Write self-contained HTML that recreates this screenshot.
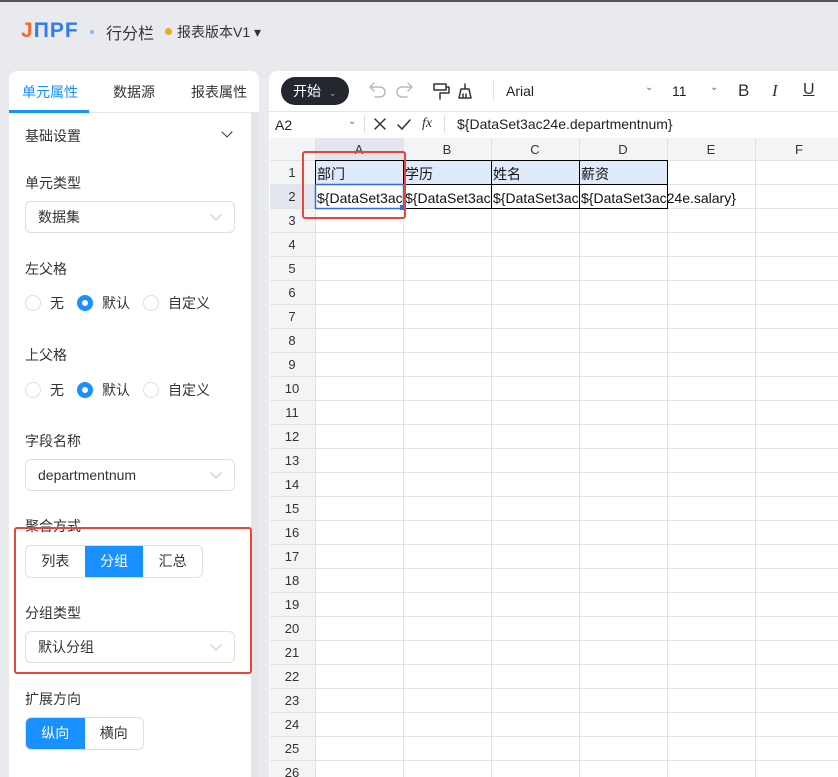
<!DOCTYPE html>
<html><head><meta charset="utf-8"><style>
*{box-sizing:border-box;margin:0;padding:0}
body{width:838px;height:777px;overflow:hidden;background:#e9eaee;font-family:"Liberation Sans","Noto Sans CJK SC",sans-serif;color:#333;position:relative;font-size:14px}
.a{position:absolute}
.lbl{position:absolute;left:25px;font-size:14px;color:#333}
.sel{position:absolute;left:25px;width:210px;height:32px;border:1px solid #dcdfe6;border-radius:6px;background:#fff;padding-left:12px;line-height:30px;font-size:14px}
.sel:after{content:"";position:absolute;right:14px;top:9px;width:7px;height:7px;border-right:1px solid #c0c4cc;border-bottom:1px solid #c0c4cc;transform:rotate(45deg)}
.radio{position:absolute;font-size:14px;display:flex;align-items:center}
.rc{width:16px;height:16px;border:1px solid #dcdfe6;border-radius:50%;margin-right:9px;display:inline-block;background:#fff}
.rc.on{border:5px solid #1890ff}
.seg{position:absolute;left:25px;display:flex;border:1px solid #dcdfe6;border-radius:6px;overflow:hidden;height:33px;background:#fff}
.seg div{width:59px;text-align:center;line-height:31px;font-size:14px}
.seg .on{background:#1890ff;color:#fff}
.grid{position:absolute;left:270px;top:138px;width:568px;height:639px;background:#fff;overflow:hidden}
</style></head><body>
<div class="a" style="left:0;top:0;width:838px;height:2px;background:#555"></div>
<div class="a" style="left:21px;top:19px;font-size:21px;letter-spacing:1px;line-height:24px;font-weight:bold"><span style="color:#f06a2a">J</span><span style="color:#2f7cf0">ΠPF</span></div>
<div class="a" style="left:90px;top:30px;width:4px;height:4px;border-radius:50%;background:#8ab4f0"></div>
<div class="a" style="left:106px;top:20px;font-size:16px;color:#333">行分栏</div>
<div class="a" style="left:165px;top:28px;width:7px;height:7px;border-radius:50%;background:#f5a623"></div>
<div class="a" style="left:177px;top:22px;font-size:14px;color:#333">报表版本V1 ▾</div>

<div class="a" style="left:9px;top:71px;width:250px;height:706px;background:#fff;border-radius:8px 8px 0 0"></div>
<div class="a" style="left:251px;top:113px;width:8px;height:664px;background:#e5e6ea"></div>
<div class="a" style="left:9px;top:112px;width:250px;height:1px;background:#e4e7ed"></div>
<div class="a" style="left:9px;top:110px;width:80px;height:3px;background:#1890ff"></div>
<div class="a" style="left:22px;top:82px;color:#1890ff;font-size:14px">单元属性</div>
<div class="a" style="left:113px;top:82px;font-size:14px">数据源</div>
<div class="a" style="left:191px;top:82px;font-size:14px">报表属性</div>
<div class="lbl" style="top:126px">基础设置</div>
<div class="a" style="left:223px;top:128px;width:8px;height:8px;border-right:1.5px solid #333;border-bottom:1.5px solid #333;transform:rotate(45deg)"></div>
<div class="lbl" style="top:173px">单元类型</div>
<div class="sel" style="top:201px">数据集</div>
<div class="lbl" style="top:259px">左父格</div>
<div class="radio" style="left:25px;top:293px"><span class="rc"></span>无</div>
<div class="radio" style="left:77px;top:293px"><span class="rc on"></span>默认</div>
<div class="radio" style="left:143px;top:293px"><span class="rc"></span>自定义</div>
<div class="lbl" style="top:345px">上父格</div>
<div class="radio" style="left:25px;top:380px"><span class="rc"></span>无</div>
<div class="radio" style="left:77px;top:380px"><span class="rc on"></span>默认</div>
<div class="radio" style="left:143px;top:380px"><span class="rc"></span>自定义</div>
<div class="lbl" style="top:431px">字段名称</div>
<div class="sel" style="top:459px">departmentnum</div>
<div class="lbl" style="top:516px">聚合方式</div>
<div class="seg" style="top:545px;width:178px"><div>列表</div><div class="on">分组</div><div>汇总</div></div>
<div class="lbl" style="top:603px">分组类型</div>
<div class="sel" style="top:631px">默认分组</div>
<div class="a" style="left:14px;top:527px;width:238px;height:147px;border:2px solid #e8453c;border-radius:3px"></div>
<div class="lbl" style="top:689px">扩展方向</div>
<div class="seg" style="top:717px;width:119px"><div class="on">纵向</div><div>横向</div></div>

<div class="a" style="left:269px;top:71px;width:569px;height:706px;background:#fff;border-radius:8px 0 0 0"></div>
<div class="a" style="left:281px;top:77px;width:68px;height:28px;border-radius:14px;background:#23272e;color:#fff;font-size:14px;line-height:28px;padding-left:12px">开始 <span style="font-size:9px;color:#aaa;margin-left:4px">⌄</span></div>
<svg class="a" style="left:360px;top:76px" width="140" height="30" fill="none" stroke-width="1.5" stroke-linecap="round" stroke-linejoin="round">
<path d="M14 9 L10 13 L14 17 M10 13 H20 A5 5 0 0 1 20 23 H15" stroke="#bbb" transform="translate(0,-2)"/>
<path d="M52 9 L56 13 L52 17 M56 13 H46 A5 5 0 0 0 46 23 H51" stroke="#bbb" transform="translate(-4,-2)"/>
<path d="M74 8 H86 V14 H74 Z M86 11 H89 V17 H80 V23" stroke="#333"/>
<path d="M105 8 V13 M101 13 H109 L111 22 H99 Z M103 18 V22 M106 18 V22" stroke="#333"/>
</svg>
<div class="a" style="left:493px;top:80px;width:1px;height:22px;background:#e4e4e4"></div>
<div class="a" style="left:506px;top:83px;font-size:14px;color:#222">Arial</div>
<div class="a" style="left:645px;top:82px;font-size:10px;color:#666">⌄</div>
<div class="a" style="left:672px;top:83px;font-size:14px;color:#222">11</div>
<div class="a" style="left:710px;top:82px;font-size:10px;color:#666">⌄</div>
<div class="a" style="left:738px;top:81px;font-size:17px;color:#333">B</div>
<div class="a" style="left:772px;top:81px;font-size:17px;color:#333;font-style:italic;font-family:'Liberation Serif',serif">I</div>
<div class="a" style="left:803px;top:81px;font-size:16px;color:#333;text-decoration:underline">U</div>
<div class="a" style="left:269px;top:111px;width:569px;height:1px;background:#e4e4e4"></div>
<div class="a" style="left:275px;top:117px;font-size:14px;color:#222">A2</div>
<div class="a" style="left:348px;top:116px;font-size:10px;color:#666">⌄</div>
<div class="a" style="left:364px;top:115px;width:1px;height:18px;background:#ddd"></div>
<svg class="a" style="left:370px;top:115px" width="70" height="20" fill="none" stroke="#333" stroke-width="1.5" stroke-linecap="round">
<path d="M5 4 L15 14 M15 4 L5 14"/><path d="M28 10 L32 14 L40 5"/>
</svg>
<div class="a" style="left:422px;top:116px;font-size:14px;font-style:italic;font-family:'Liberation Serif',serif;color:#333">fx</div>
<div class="a" style="left:444px;top:115px;width:1px;height:18px;background:#ddd"></div>
<div class="a" style="left:457px;top:116px;font-size:14px;color:#222">${DataSet3ac24e.departmentnum}</div>

<div class="grid">
<svg width="568" height="639" style="position:absolute;left:0;top:0">
<rect x="0" y="0" width="568" height="22" fill="#f3f4f6"/>
<rect x="0" y="0" width="45" height="639" fill="#f3f4f6"/>
<rect x="45" y="0" width="88" height="22" fill="#e3e6ee"/>
<rect x="0" y="46" width="45" height="24" fill="#e3e6ee"/>
<rect x="45" y="22" width="352" height="24" fill="#dfeafb"/>
<g stroke="#e2e2e2" stroke-width="1">
<line x1="45.5" y1="0" x2="45.5" y2="639"/><line x1="133.5" y1="0" x2="133.5" y2="639"/><line x1="221.5" y1="0" x2="221.5" y2="639"/><line x1="309.5" y1="0" x2="309.5" y2="639"/><line x1="397.5" y1="0" x2="397.5" y2="639"/><line x1="485.5" y1="0" x2="485.5" y2="639"/>
<line x1="0" y1="22.5" x2="568" y2="22.5"/>
<line x1="0" y1="46.5" x2="568" y2="46.5"/><line x1="0" y1="70.5" x2="568" y2="70.5"/><line x1="0" y1="94.5" x2="568" y2="94.5"/><line x1="0" y1="118.5" x2="568" y2="118.5"/><line x1="0" y1="142.5" x2="568" y2="142.5"/><line x1="0" y1="166.5" x2="568" y2="166.5"/><line x1="0" y1="190.5" x2="568" y2="190.5"/><line x1="0" y1="214.5" x2="568" y2="214.5"/><line x1="0" y1="238.5" x2="568" y2="238.5"/><line x1="0" y1="262.5" x2="568" y2="262.5"/><line x1="0" y1="286.5" x2="568" y2="286.5"/><line x1="0" y1="310.5" x2="568" y2="310.5"/><line x1="0" y1="334.5" x2="568" y2="334.5"/><line x1="0" y1="358.5" x2="568" y2="358.5"/><line x1="0" y1="382.5" x2="568" y2="382.5"/><line x1="0" y1="406.5" x2="568" y2="406.5"/><line x1="0" y1="430.5" x2="568" y2="430.5"/><line x1="0" y1="454.5" x2="568" y2="454.5"/><line x1="0" y1="478.5" x2="568" y2="478.5"/><line x1="0" y1="502.5" x2="568" y2="502.5"/><line x1="0" y1="526.5" x2="568" y2="526.5"/><line x1="0" y1="550.5" x2="568" y2="550.5"/><line x1="0" y1="574.5" x2="568" y2="574.5"/><line x1="0" y1="598.5" x2="568" y2="598.5"/><line x1="0" y1="622.5" x2="568" y2="622.5"/>
</g>
<g stroke="#000" stroke-width="1" fill="none">
<rect x="45.5" y="22.5" width="352" height="48"/>
<line x1="133.5" y1="22" x2="133.5" y2="70"/><line x1="221.5" y1="22" x2="221.5" y2="70"/><line x1="309.5" y1="22" x2="309.5" y2="70"/><line x1="45" y1="46.5" x2="397" y2="46.5"/>
</g>
<rect x="45.5" y="46.5" width="88" height="24" fill="none" stroke="#2f6bf0" stroke-width="1.5"/>
<rect x="130" y="67" width="5" height="5" fill="#2f6bf0"/>
<g font-family="Liberation Sans, Noto Sans CJK SC, sans-serif" font-size="13" fill="#333" text-anchor="middle">
<text x="89" y="16">A</text><text x="177" y="16">B</text><text x="265" y="16">C</text><text x="353" y="16">D</text><text x="441" y="16">E</text><text x="529" y="16">F</text>
<text x="22" y="39">1</text><text x="22" y="63">2</text><text x="22" y="87">3</text><text x="22" y="111">4</text><text x="22" y="135">5</text><text x="22" y="159">6</text><text x="22" y="183">7</text><text x="22" y="207">8</text><text x="22" y="231">9</text><text x="22" y="255">10</text><text x="22" y="279">11</text><text x="22" y="303">12</text><text x="22" y="327">13</text><text x="22" y="351">14</text><text x="22" y="375">15</text><text x="22" y="399">16</text><text x="22" y="423">17</text><text x="22" y="447">18</text><text x="22" y="471">19</text><text x="22" y="495">20</text><text x="22" y="519">21</text><text x="22" y="543">22</text><text x="22" y="567">23</text><text x="22" y="591">24</text><text x="22" y="615">25</text><text x="22" y="639">26</text>
</g>
<g font-family="Liberation Sans, Noto Sans CJK SC, sans-serif" font-size="14" fill="#111">
<text x="47" y="41">部门</text><text x="135" y="41">学历</text><text x="223" y="41">姓名</text><text x="311" y="41">薪资</text>
<svg x="45" y="46" width="87" height="24"><text x="2" y="19">${DataSet3ac24e</text></svg>
<svg x="133" y="46" width="87" height="24"><text x="2" y="19">${DataSet3ac24e</text></svg>
<svg x="221" y="46" width="87" height="24"><text x="2" y="19">${DataSet3ac24e</text></svg>
<text x="311" y="65">${DataSet3ac24e.salary}</text>
</g>
</svg>
</div>
<div class="a" style="left:302px;top:151px;width:104px;height:68px;border:2px solid #e8453c;border-radius:3px"></div>
</body></html>
